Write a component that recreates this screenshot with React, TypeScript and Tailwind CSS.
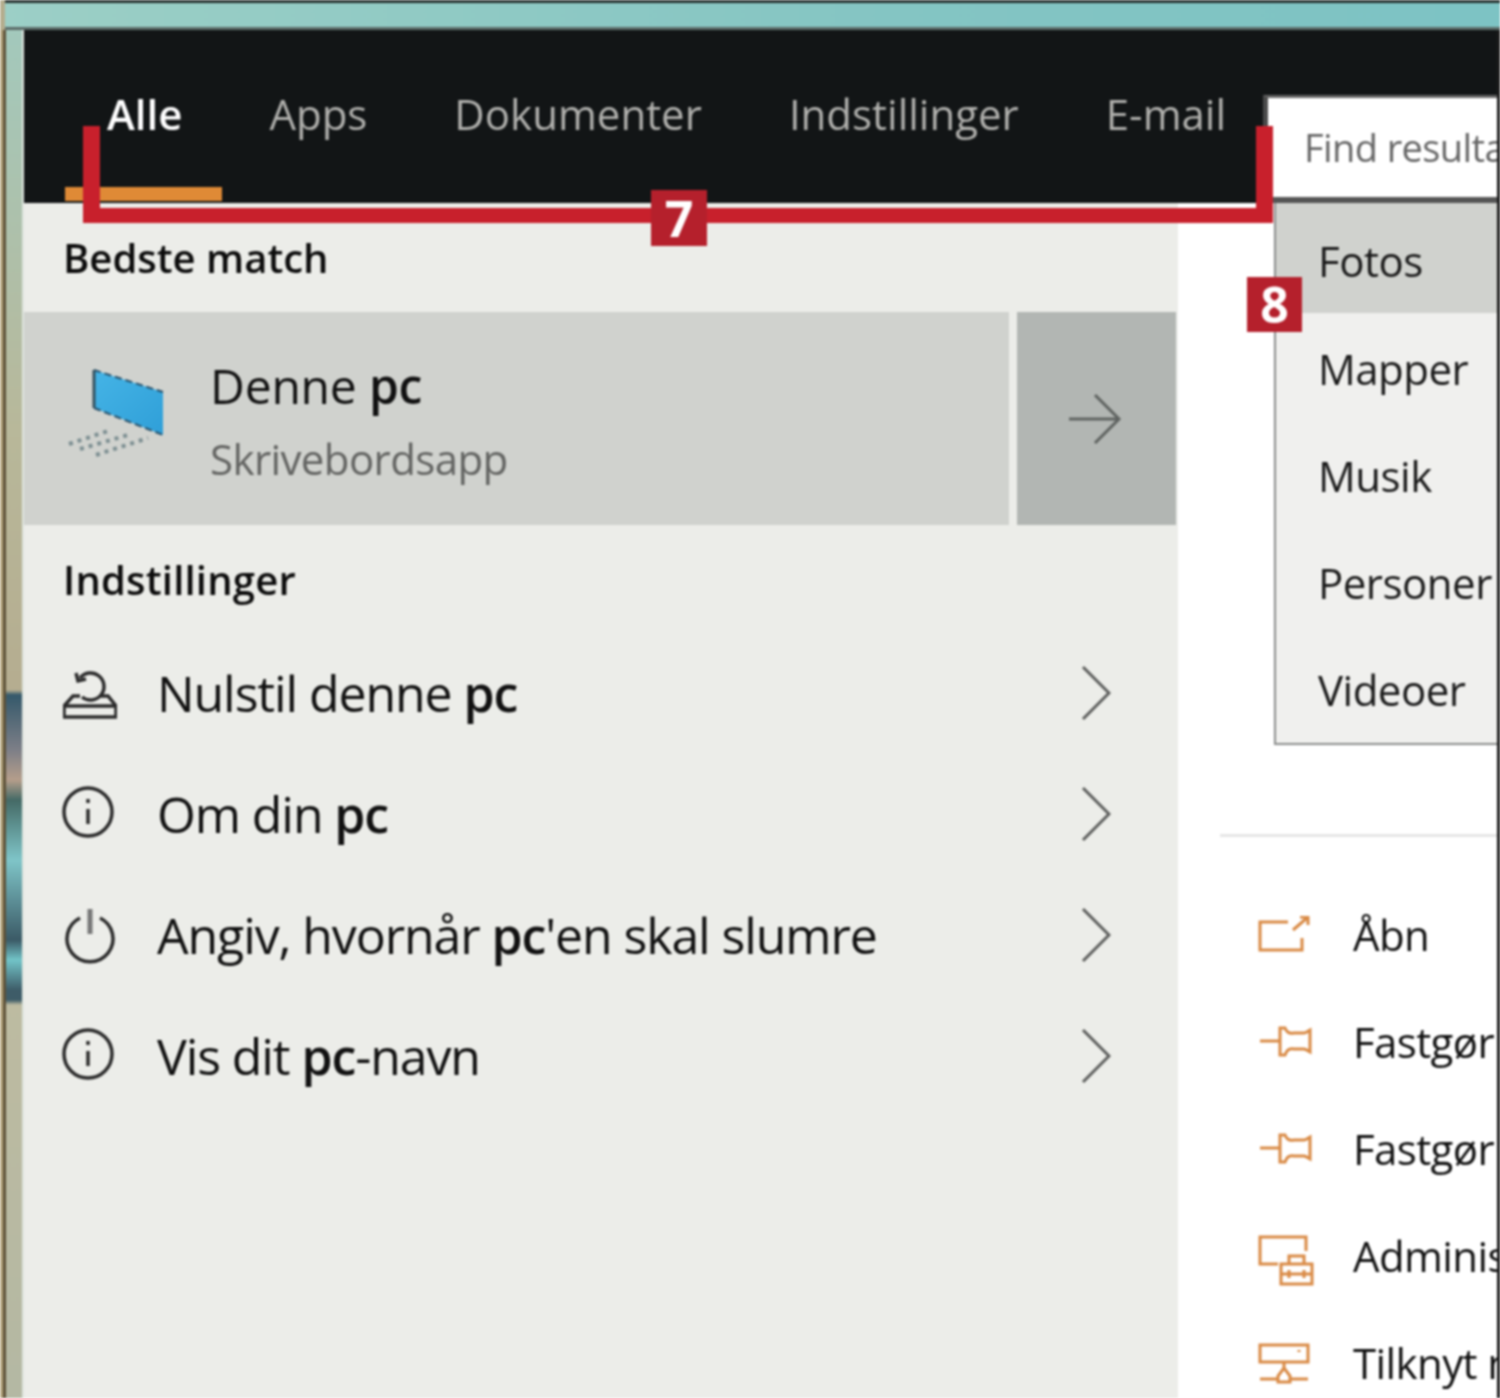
import type { ReactNode } from 'react';

const tabs = ['Alle', 'Apps', 'Dokumenter', 'Indstillinger', 'E-mail'];
const filters = ['Fotos', 'Mapper', 'Musik', 'Personer', 'Videoer'];

function InfoIcon() {
  return (
    <svg viewBox="0 0 54 54" className="w-[54px] h-[54px] shrink-0 overflow-visible" fill="none" stroke="#2b2b2b" strokeWidth="3.500">
      <circle cx="25" cy="22" r="24" />
      <path d="M25 19v15M25 9v4" />
    </svg>
  );
}

function PowerIcon() {
  return (
    <svg viewBox="0 0 54 64" className="w-[54px] h-[64px] shrink-0" fill="none" stroke="#2b2b2b" strokeWidth="3.500">
      <path d="M17 12a23 23 0 1 0 20 0" />
      <path d="M27 3v25" stroke="#777" strokeWidth="5" />
    </svg>
  );
}

function ResetIcon() {
  return (
    <svg viewBox="0 0 54 52" className="w-[54px] h-[52px] shrink-0" fill="none" stroke="#2b2b2b" strokeWidth="3.500">
      <path d="M1 36H53V47H1Z" />
      <path d="M1 36L10 26H17M37 26H45L53 36" />
      <path d="M17 8A13.500 13.500 0 1 1 19 27" />
      <path d="M13 3L15 11L23 9" strokeWidth="3.500" />
    </svg>
  );
}

function Chevron() {
  return (
    <svg viewBox="0 0 30 56" className="w-[30px] h-[56px] -mt-[6px]" fill="none" stroke="#5c5d5c" strokeWidth="3">
      <path d="M2 2L28 28L2 54" />
    </svg>
  );
}

function SettingRow({ icon, children }: { icon: ReactNode; children: ReactNode }) {
  return (
    <div className="h-[121px] shrink-0 flex items-center pl-[39px] pr-[67px]">
      {icon}
      <div className="ml-[40px] -mt-[4px] flex-1 text-[50px] tracking-[-1.1px] text-[#111] whitespace-nowrap">{children}</div>
      <Chevron />
    </div>
  );
}

function OpenIcon() {
  return (
    <svg viewBox="0 0 54 40" className="w-[54px] h-[40px] shrink-0 -mt-[3px]" fill="none" stroke="#d98a45" strokeWidth="3">
      <path d="M30 6H2V34H44V22" />
      <path d="M35 14L50 1M42 1H50V9" />
    </svg>
  );
}

function PinIcon() {
  return (
    <svg viewBox="0 0 54 40" className="w-[54px] h-[40px] shrink-0" fill="none" stroke="#d98a45" strokeWidth="3">
      <path d="M2 16H22" />
      <path d="M22 3H27C29 8 32 9 36 8H46C48 8 50 6 52 5V27C50 26 48 24 46 24H36C32 23 29 24 27 30H22Z" />
    </svg>
  );
}

function AdminIcon() {
  return (
    <svg viewBox="0 0 56 56" className="w-[56px] h-[56px] shrink-0" fill="none" stroke="#d98a45" strokeWidth="3">
      <path d="M20 33H2V6H48V20" />
      <rect x="23" y="33" width="31" height="20" />
      <path d="M31 33V25H46V33M23 43H54M31 39V47M46 39V47" />
    </svg>
  );
}

function ConnectIcon() {
  return (
    <svg viewBox="0 0 56 56" className="w-[56px] h-[56px] shrink-0" fill="none" stroke="#d98a45" strokeWidth="3">
      <rect x="2" y="7" width="48" height="17" />
      <path d="M26 24V30L32 38V44H20V38L26 30M2 41H20M32 41H50M41 12v2" />
    </svg>
  );
}

function ActionRow({ icon, label }: { icon: ReactNode; label: string }) {
  return (
    <div className="h-[107px] shrink-0 flex items-center pl-[80px]">
      <div className="w-[96px] shrink-0 flex items-center">{icon}</div>
      <span className="-mt-[7px] -ml-[1px] text-[42px] tracking-[-0.6px] text-[#111] whitespace-nowrap">{label}</span>
    </div>
  );
}

function PcIcon() {
  return (
    <svg viewBox="0 0 100 95" className="w-[100px] h-[95px] shrink-0 -mt-[12px]">
      <defs>
        <linearGradient id="screen" x1="0" y1="0" x2="1" y2="1">
          <stop offset="0" stopColor="#45b4e6" />
          <stop offset="1" stopColor="#2f9fd8" />
        </linearGradient>
      </defs>
      <path d="M28 5L97 27V70L28 43Z" fill="url(#screen)" />
      <path d="M28 5L97 27M28 43L97 70" stroke="#26506a" strokeWidth="2" strokeDasharray="7 4" fill="none" />
      <path d="M28 5V43" stroke="#33515f" strokeWidth="3" />
      <path d="M3 79L42 66M14 84L62 70M30 90L82 73" stroke="#7d8f92" strokeWidth="4" strokeDasharray="4 5" fill="none" />
    </svg>
  );
}

function Badge({ className, children }: { className: string; children: string }) {
  return (
    <div className={`absolute bg-[#b5202c] text-white font-bold text-[50px] flex items-center justify-center ${className}`}>
      {children}
    </div>
  );
}

export default function App() {
  return (
    <div className="relative w-[1500px] h-[1398px] overflow-hidden bg-[#b4ad8e] flex flex-col blur-[1px] font-['Open_Sans','Noto_Sans',sans-serif]">
      <div className="h-[30px] shrink-0 border-t-[3px] border-b-[3px] border-t-[#25302e] border-b-[#5b6b68] ml-[5px] bg-[linear-gradient(to_right,#9ccfc6,#84c5c3_60%,#7dc3c4)]" />
      <div className="flex-1 flex min-h-0">
        <div className="w-[24px] shrink-0 flex border-l-[3px] border-l-[#b5a67f]">
          <div className="w-[3px] bg-[#5e5239]" />
          <div className="flex-1 bg-[linear-gradient(to_bottom,#a3c9bc_0px,#b8b89a_400px,#b5ad90_660px,#35596b_665px,#7d7f87_720px,#b59e8b_750px,#456a66_770px,#7fc5c8_830px,#3b5a66_910px,#72c4c8_930px,#3e5c68_960px,#3e5c68_970px,#bdbba1_975px,#b4b8a3_1368px)]" />
          <div className="w-[2px] bg-[#dfe5df]" />
        </div>
        <div className="flex-1 flex flex-col min-w-0 border-r-[3px] border-r-[#1c1c1c]">
          <div className="h-[173px] shrink-0 bg-[#121516] flex">
            <div className="w-[1239px] shrink-0 flex flex-col justify-between">
              <div className="flex gap-[87px] pl-[83px] pt-[54px] text-[42px] tracking-[0px] leading-[60px] text-[#b0b0ad] whitespace-nowrap">
                {tabs.map((t, i) => (
                  <span key={t} className={i === 0 ? 'text-white font-semibold' : ''}>{t}</span>
                ))}
              </div>
              <div className="ml-[41px] mb-[2px] w-[157px] h-[14px] bg-[#df8a36]" />
            </div>
            <div className="flex-1 self-end h-[108px] bg-white border-l-[5px] border-t-[3px] border-b-[6px] border-l-[#4a4a4a] border-t-[#666] border-b-[#555] pl-[36px] flex items-center text-[38px] tracking-[-0.6px] text-[#666] whitespace-nowrap overflow-hidden">
              Find resultater
            </div>
          </div>
          <div className="flex-1 flex min-h-0">
            <div className="w-[1154px] shrink-0 bg-[#ecede9] flex flex-col">
              <div className="h-[109px] shrink-0 flex items-center pl-[39px] pt-[1px] text-[40px] font-semibold tracking-[0px] text-[#0c0c0c]">
                Bedste match
              </div>
              <div className="h-[213px] shrink-0 flex gap-[8px] pr-[2px]">
                <div className="flex-1 bg-[#d0d2ce] flex items-center pl-[42px]">
                  <PcIcon />
                  <div className="ml-[44px] mt-[4px] whitespace-nowrap">
                    <div className="text-[48px] tracking-[-0.2px] leading-[66px] text-[#111]">
                      Denne <span className="font-semibold">pc</span>
                    </div>
                    <div className="text-[42px] tracking-[-0.6px] leading-[60px] mt-[10px] text-[#636462]">Skrivebordsapp</div>
                  </div>
                </div>
                <div className="w-[159px] shrink-0 bg-[#b2b6b3] flex items-center justify-center">
                  <svg viewBox="0 0 54 50" className="w-[54px] h-[50px] mr-[4px]" fill="none" stroke="#5f6361" strokeWidth="3">
                    <path d="M1 25H51M27 1L51 25L27 49" />
                  </svg>
                </div>
              </div>
              <div className="h-[110px] shrink-0 flex items-center pl-[39px] text-[40px] font-semibold tracking-[0.2px] text-[#0c0c0c]">
                Indstillinger
              </div>
              <SettingRow icon={<ResetIcon />}>
                Nulstil denne <span className="font-semibold">pc</span>
              </SettingRow>
              <SettingRow icon={<InfoIcon />}>
                Om din <span className="font-semibold">pc</span>
              </SettingRow>
              <SettingRow icon={<PowerIcon />}>
                Angiv, hvornår <span className="font-semibold">pc</span>'en skal slumre
              </SettingRow>
              <SettingRow icon={<InfoIcon />}>
                Vis dit <span className="font-semibold">pc</span>-navn
              </SettingRow>
            </div>
            <div className="flex-1 bg-white flex flex-col min-w-0 overflow-hidden">
              <div className="h-[631px] shrink-0" />
              <div className="h-[3px] shrink-0 ml-[42px] bg-[#e6e6e6]" />
              <div className="h-[47px] shrink-0" />
              <ActionRow icon={<OpenIcon />} label="Åbn" />
              <ActionRow icon={<PinIcon />} label="Fastgør til Start" />
              <ActionRow icon={<PinIcon />} label="Fastgør til proceslinjen" />
              <ActionRow icon={<AdminIcon />} label="Administrer" />
              <ActionRow icon={<ConnectIcon />} label="Tilknyt netværksdrev" />
            </div>
          </div>
        </div>
      </div>

      {/* filter dropdown under the search box */}
      <div className="absolute left-[1274px] top-[203px] w-[223px] h-[542px] bg-[#f0f0ee] border-l-[2px] border-b-[2px] border-[#8b8d8c] pt-0 text-[42px] tracking-[-0.5px] text-[#1a1a1a]">
        {filters.map((f, i) => (
          <div
            key={f}
            className={i === 0 ? 'h-[110px] pl-[42px] pt-[4px] flex items-center bg-[#d0d2ce]' : 'h-[107px] pl-[42px] pt-[4px] flex items-center'}
          >
            {f}
          </div>
        ))}
      </div>

      {/* red annotation bracket */}
      <div className="absolute left-[83px] top-[126px] w-[1190px] h-[97px] border-l-[17px] border-r-[17px] border-b-[15px] border-[#c8202c]" />
      <Badge className="left-[651px] top-[190px] w-[56px] h-[56px]">7</Badge>
      <Badge className="left-[1247px] top-[277px] w-[55px] h-[55px]">8</Badge>
    </div>
  );
}
